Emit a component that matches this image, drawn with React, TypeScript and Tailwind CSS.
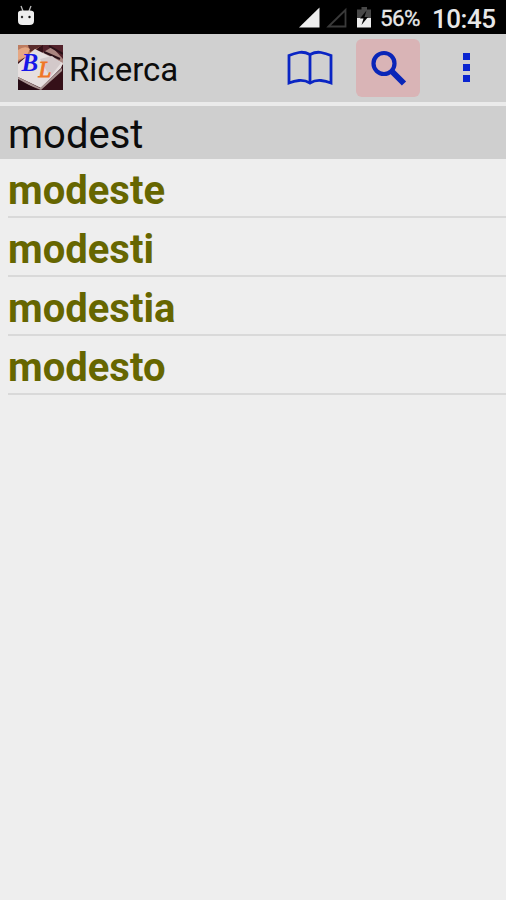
import React, { useState } from "react"

const words = ["modeste", "modesti", "modestia", "modesto"]

const StatusBar = () => {
  return (
    <div className="flex items-start w-full h-[34px] bg-black text-[#e8e8e8]">
      <svg className="ml-[17px] mt-[5px]" width="18" height="22" viewBox="0 0 18 22">
        <path d="M4 1l2 5M14 1l-2 5" stroke="#bdbdbd" strokeWidth="1.3" />
        <path d="M1 8Q1 5.500 5 5.500H13Q17 5.500 17 8V16Q17 20 12.500 20H5.500Q1 20 1 16Z" fill="#eeeeee" />
        <circle cx="5" cy="12" r="1.200" fill="#333" />
        <circle cx="12.500" cy="12" r="1.200" fill="#111" />
      </svg>
      {/* SIGNAL AND BATTERY */}
      <svg className="ml-auto" width="80" height="34" viewBox="0 0 80 34">
        <path d="M4 27.500L24.500 7.500V27.500Z" fill="#eeeeee" />
        <path d="M33.500 26.500L50.500 10V26.500Z" fill="none" stroke="#3a3a3a" strokeWidth="1.800" />
        <path d="M62 9.500H66.500V7H72V9.500H76V18H62Z" fill="#484848" />
        <path d="M62 18H76V27.500H62Z" fill="#eeeeee" />
        <path d="M71.500 10.500L65 18.500H68.500L66.500 25L73 17H69.500Z" fill="#050505" />
      </svg>
      <span className="ml-[5px] mt-[5px] w-[40px] text-[22.500px] leading-[26px] tracking-[-0.7px] whitespace-nowrap [-webkit-text-stroke:0.3px]">
        56%
      </span>
      <span className="ml-[12px] mr-[10px] mt-[5px] w-[64px] text-[26px] leading-[28px] font-medium tracking-[-0.5px] whitespace-nowrap">
        10:45
      </span>
    </div>
  )
}

const Logo = () => {
  return (
    <svg className="ml-[18px] shrink-0" width="45" height="45" viewBox="0 0 45 45">
      <rect width="45" height="45" fill="#351018" />
      <path d="M0 0H24L12 9L0 17Z" fill="#bd7c60" />
      <path d="M10 0H25L12 7Z" fill="#592b2b" />
      <path d="M0 5Q7 0 12 4L8 12L0 15Z" fill="#e5a783" />
      <path d="M25 0H45V19L25 10Z" fill="#52222b" />
      <path d="M24 8L34 2L45 14V20L36 17Z" fill="#aa8580" />
      <path d="M26 7L42 14M31 1L45 9" stroke="#2a1118" strokeWidth="2" />
      <path d="M0 19L17 4L45 18L43 23L23 43L0 32Z" fill="#e6dfdf" />
      <path d="M0 32L22 43L44 23V26L23 45L0 36Z" fill="#a99493" />
      <path d="M0 34L20 45H0Z" fill="#260b14" />
      <path d="M22 14L34 11L43 18L32 32Z" fill="#d3c9ca" />
      <text x="3.500" y="26" fontSize="25" fontWeight="700" fontStyle="italic" fontFamily="Liberation Serif, serif" fill="#1717e8">
        B
      </text>
      <text x="20.500" y="32" fontSize="23" fontStyle="italic" fontFamily="Liberation Serif, serif" fill="#f07626" stroke="#f07626" strokeWidth="0.900">
        L
      </text>
    </svg>
  )
}

const ActionBar = () => {
  return (
    <div className="flex items-center w-full h-[68px] pb-px bg-[#d0d0d0]">
      <Logo />
      <h1 className="ml-[6px] mt-[5px] text-[33px] leading-[40px] text-[#0c0c0c]">
        Ricerca
      </h1>
      <button className="ml-auto mr-[23px]" aria-label="Dizionario">
        <svg width="46" height="36" viewBox="0 0 46 36" fill="none" stroke="#0a25c4" strokeWidth="2.800">
          <path d="M23 4.500Q17 1.500 12 2.500Q7 3.500 2 5.500V33Q7 31 12 30.500Q18 30 23 33Q28 30 34 30.500Q39 31 44 33V5.500Q39 3.500 34 2.500Q29 1.500 23 4.500Z" />
          <path d="M23 4V33" />
        </svg>
      </button>
      <button className="flex items-center justify-center w-[64px] h-[58px] rounded-md bg-[#d9b4b6]" aria-label="Cerca">
        <svg width="64" height="58" viewBox="0 0 64 58" fill="none" stroke="#0a25b8">
          <circle cx="28" cy="24.500" r="10.500" strokeWidth="4.200" />
          <path d="M35.500 32L48 44.500" strokeWidth="6" />
        </svg>
      </button>
      <button className="flex flex-col gap-[4px] ml-[43px] mr-[36px]" aria-label="Menu">
        <span className="w-[7px] h-[7px] bg-[#0a25d0]" />
        <span className="w-[7px] h-[7px] bg-[#0a25d0]" />
        <span className="w-[7px] h-[7px] bg-[#0a25d0]" />
      </button>
    </div>
  )
}

const App = () => {
  const [query, setQuery] = useState("modest")

  return (
    <div className="flex flex-col w-full h-screen overflow-hidden bg-[#eeeeee] font-[Roboto,sans-serif]">
      <StatusBar />
      <ActionBar />
      {/* SEARCH FIELD */}
      <div className="w-full h-[57px] pt-[5px] border-t-[4px] border-[#ebebeb] bg-[#cfcfcf]">
        <input
          className="block w-full h-[48px] px-[8px] bg-transparent text-[40px] text-[#0c0c0c] outline-none"
          value={query}
          spellCheck={false}
          onChange={(e) => setQuery(e.target.value)}
        />
      </div>
      {/* RESULTS */}
      <ul className="pl-[8px]">
        {words.map((word) => (
          <li
            key={word}
            className="h-[59px] pt-[8px] border-b-2 border-[#d9d9d9] text-[40px] leading-[48px] font-bold text-[#666600]"
          >
            {word}
          </li>
        ))}
      </ul>
    </div>
  )
}

export default App
